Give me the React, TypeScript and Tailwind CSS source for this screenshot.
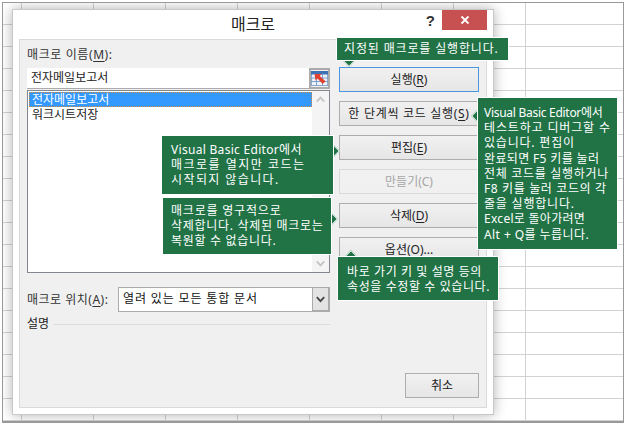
import React from "react";

const FONT = "font-['Noto_Sans','Noto_Sans_CJK_KR',sans-serif]";

function Btn({ children, focused, disabled, className = "" }: { children: React.ReactNode; focused?: boolean; disabled?: boolean; className?: string }) {
  return (
    <div
      className={
        "h-[25px] flex items-center justify-center text-[12px] bg-gradient-to-b from-[#f1f1f1] to-[#e6e6e6] border " +
        (focused
          ? "border-[#4a96e0] border-[1.5px] text-[#222] "
          : disabled
          ? "border-[#d9d9d9] from-[#f0f0f0] to-[#f0f0f0] text-[#a6a6a6] "
          : "border-[#adadad] text-[#222] ") +
        className
      }
    >
      {children}
    </div>
  );
}

function U({ children }: { children: React.ReactNode }) {
  return <span className="underline underline-offset-2">{children}</span>;
}

type Line = { t: string; c: string };

function Tip({ lines, pos, arrow, body }: { lines: Line[]; pos: string; arrow: string; body: string }) {
  return (
    <div className={"absolute z-10 " + pos}>
      <div className={"absolute w-[10px] h-[10px] rotate-45 bg-[#217346] border border-white " + arrow} />
      <div className={"relative bg-[#217346] border border-white text-white text-[12px] leading-[15.2px] whitespace-nowrap " + body}>
        {lines.map((l) => (
          <div key={l.t} className={l.c}>
            {l.t}
          </div>
        ))}
      </div>
    </div>
  );
}

export default function App() {
  return (
    <div className={"relative w-[626px] h-[425px] bg-white overflow-hidden pl-[2px] pt-[2px] " + FONT}>
      <div className="relative w-[622px] h-[421px] border border-b-2 border-[#999] overflow-hidden bg-white bg-[linear-gradient(to_bottom,#d2d2d2_1px,transparent_1px)] bg-[size:100%_22px] bg-[position:0_21px]">
        <div className="flex h-full">
          <div className="w-[19px] border-r border-[#d2d2d2]" />
          <div className="w-[72px] border-r border-[#d2d2d2]" />
          <div className="w-[72px] border-r border-[#d2d2d2]" />
          <div className="w-[72px] border-r border-[#d2d2d2]" />
          <div className="w-[72px] border-r border-[#d2d2d2]" />
          <div className="w-[72px] border-r border-[#d2d2d2]" />
          <div className="w-[72px] border-r border-[#d2d2d2]" />
          <div className="w-[72px] border-r border-[#d2d2d2]" />
        </div>

        {/* dialog window */}
        <div className="absolute left-[9px] top-[6px] w-[482px] h-[406px] bg-white border border-[#c8c8c8] shadow-[0_0_12px_rgba(0,0,0,0.3)] flex flex-col px-[6px] pb-[6px]">
          <div className="relative h-[29px] shrink-0 flex items-center justify-center">
            <span className="text-[16px] text-[#222] mt-[-1px]">매크로</span>
            <span className="absolute right-[52px] top-[0px] font-['Liberation_Sans'] font-bold text-[15px] text-[#333]">?</span>
            <div className="absolute right-[0px] top-0 w-[45px] h-[20px] bg-[#c75050] flex items-center justify-center">
              <svg width="10" height="10" viewBox="0 0 10 10">
                <path d="M1.5 1.5 L8.5 8.5 M8.5 1.5 L1.5 8.5" stroke="#fff" strokeWidth="1.8" />
              </svg>
            </div>
          </div>

          <div className="flex-1 bg-[#f0f0f0] border border-[#dadada] flex gap-[9px] px-[7px] pb-[9px]">
            {/* left column */}
            <div className="w-[303px] flex flex-col text-[12px] text-[#222]">
              <div className="h-[28px] pt-[7px] leading-[16px] text-[#333] tracking-[0.6px]">
                매크로 이름(<U>M</U>):
              </div>
              <div className="h-[21px] flex">
                <div className="flex-1 bg-white border-b border-[#ababab] pl-[4px] leading-[19px]">전자메일보고서</div>
                <div className="w-[21px] bg-[#f0f0f0] border-2 border-[#ababab] flex items-center justify-center">
                  <svg width="17" height="15" viewBox="0 0 17 15">
                    <rect x="0.5" y="0.5" width="16" height="14" fill="#eef3fa" stroke="#8aa8d0" />
                    <rect x="0" y="0" width="17" height="3.5" fill="#3f73b5" />
                    <path d="M0 7H17M0 10.5H17M5.5 3V15M11.5 3V15" stroke="#7f9fca" />
                    <path d="M3.5 3 L10.5 3 L8.8 5 L14.5 10.2 L11.8 13 L6.5 7.5 L4.6 9.4 Z" fill="#e2412d" />
                  </svg>
                </div>
              </div>
              <div className="mt-[1px] h-[183px] bg-white border border-[#828790] flex p-[1px] pr-0">
                <div className="flex-1 leading-[15px]">
                  <div className="h-[15px] bg-[#3399ff] text-white outline outline-1 -outline-offset-1 outline-dotted outline-[#d98a3c] pl-[3px]">전자메일보고서</div>
                  <div className="pl-[3px] text-[#222]">워크시트저장</div>
                </div>
                <div className="w-[17px] bg-[#f4f4f4] flex flex-col justify-between items-center mt-[-1px] mb-[-1px]">
                  <div className="h-[17px] flex items-center justify-center">
                    <svg width="9" height="7" viewBox="0 0 9 7"><path d="M0.8 5.6 L4.5 1.6 L8.2 5.6" fill="none" stroke="#c4c4c4" strokeWidth="1.8" /></svg>
                  </div>
                  <div className="h-[17px] flex items-center justify-center">
                    <svg width="9" height="7" viewBox="0 0 9 7"><path d="M0.8 1.4 L4.5 5.4 L8.2 1.4" fill="none" stroke="#c4c4c4" strokeWidth="1.8" /></svg>
                  </div>
                </div>
              </div>
              <div className="mt-[14px] h-[25px] flex items-center">
                <div className="w-[91px] text-[#333] tracking-[0.5px]">매크로 위치(<U>A</U>):</div>
                <div className="flex-1 h-[25px] bg-white border border-[#ababab] flex">
                  <div className="flex-1 pl-[4px] leading-[22px] text-[#111] tracking-[0.85px]">열려 있는 모든 통합 문서</div>
                  <div className="w-[17px] bg-[#e3e3e3] border-l border-[#ababab] border-r border-b border-r-[#ababab] flex items-center justify-center">
                    <svg width="9" height="7" viewBox="0 0 9 7"><path d="M0.8 1.2 L4.5 5.2 L8.2 1.2" fill="none" stroke="#444" strokeWidth="1.8" /></svg>
                  </div>
                </div>
              </div>
              <div className="mt-[3px] flex items-center gap-[5px]">
                <span>설명</span>
                <div className="flex-1 h-px bg-[#dcdcdc]" />
              </div>
            </div>

            {/* right column */}
            <div className="w-[140px] pt-[27px] flex flex-col gap-[9px]">
              <Btn focused>
                실행(<U>R</U>)
              </Btn>
              <Btn className="tracking-[0.7px]">
                한 단계씩 코드 실행(<U>S</U>)
              </Btn>
              <Btn>
                편집(<U>E</U>)
              </Btn>
              <Btn disabled>
                만들기(C)
              </Btn>
              <Btn>
                삭제(<U>D</U>)
              </Btn>
              <Btn>
                옵션(<U>O</U>)...
              </Btn>
              <Btn className="mt-auto ml-[66px]">취소</Btn>
            </div>
          </div>
        </div>

        <Tip
          lines={[{ t: "지정된 매크로를 실행합니다.", c: "tracking-[0.85px]" }]}
          pos="left-[333px] top-[34px] w-[173px]"
          arrow="left-[8px] top-[18px]"
          body="h-[24px] pl-[7px] leading-[21px]"
        />
        <Tip
          lines={[
            { t: "Visual Basic Editor에서", c: "tracking-[-0.28px]" },
            { t: "테스트하고 디버그할 수", c: "tracking-[0.85px]" },
            { t: "있습니다. 편집이", c: "tracking-[0.8px]" },
            { t: "완료되면 F5 키를 눌러", c: "tracking-[0.35px]" },
            { t: "전체 코드를 실행하거나", c: "tracking-[0.7px]" },
            { t: "F8 키를 눌러 코드의 각", c: "tracking-[0.63px]" },
            { t: "줄을 실행합니다.", c: "tracking-[0.8px]" },
            { t: "Excel로 돌아가려면", c: "tracking-[0.28px]" },
            { t: "Alt + Q를 누릅니다.", c: "tracking-[0.43px]" },
          ]}
          pos="left-[474px] top-[94px] w-[141px]"
          arrow="left-[-4px] top-[14px]"
          body="h-[153px] pl-[6px] pt-[7px]"
        />
        <Tip
          lines={[
            { t: "Visual Basic Editor에서", c: "tracking-[0.3px]" },
            { t: "매크로를 열지만 코드는", c: "tracking-[1.5px]" },
            { t: "시작되지 않습니다.", c: "tracking-[1.4px]" },
          ]}
          pos="left-[158px] top-[132px] w-[173px]"
          arrow="right-[-4px] top-[11px]"
          body="h-[60px] pl-[9px] pt-[6px]"
        />
        <Tip
          lines={[
            { t: "매크로를 영구적으로", c: "tracking-[0.8px]" },
            { t: "삭제합니다. 삭제된 매크로는", c: "tracking-[0.7px]" },
            { t: "복원할 수 없습니다.", c: "tracking-[0.7px]" },
          ]}
          pos="left-[159px] top-[194px] w-[170px]"
          arrow="right-[-4px] top-[17px]"
          body="h-[58px] pl-[8px] pt-[5px]"
        />
        <Tip
          lines={[
            { t: "바로 가기 키 및 설명 등의", c: "tracking-[0.6px]" },
            { t: "속성을 수정할 수 있습니다.", c: "tracking-[0.6px]" },
          ]}
          pos="left-[334px] top-[253px] w-[162px]"
          arrow="left-[9px] top-[-4px]"
          body="h-[45px] pl-[9px] pt-[7px]"
        />
      </div>
    </div>
  );
}
